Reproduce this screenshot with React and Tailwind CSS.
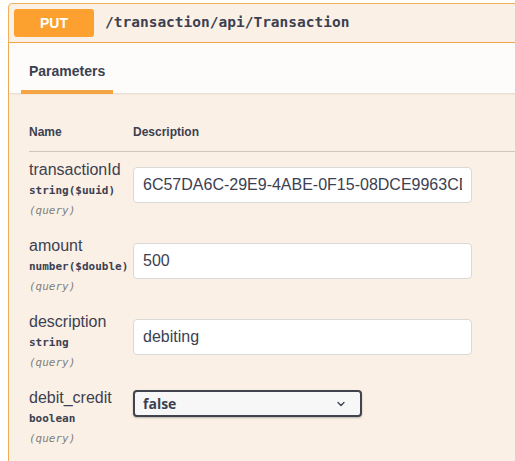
import React from "react";

const rows = [
  { name: "transactionId", type: "string($uuid)", value: "6C57DA6C-29E9-4ABE-0F15-08DCE9963CDE" },
  { name: "amount", type: "number($double)", value: "500" },
  { name: "description", type: "string", value: "debiting" },
];

const Chevron = () => (
  <svg width="10" height="10" viewBox="0 0 20 20" className="text-[#3b4151]">
    <path d="M4 7l6 6 6-6" fill="none" stroke="currentColor" strokeWidth="2.6" strokeLinecap="round" strokeLinejoin="round" />
  </svg>
);

const ParamName = ({ name, type }) => (
  <div className="w-[104px] shrink-0 text-[#3b4151]">
    <div className="text-[16px] leading-[20px] font-['Liberation_Sans',Arial,sans-serif]">{name}</div>
    <div className="text-[11px] leading-[22px] font-bold font-['DejaVu_Sans_Mono',monospace]">{type}</div>
    <div className="text-[11px] leading-[18px] italic text-[#808080] font-['DejaVu_Sans_Mono',monospace]">(query)</div>
  </div>
);

export default function App() {
  return (
    <div className="w-[515px] h-[461px] overflow-hidden bg-white pt-[3px] pl-[8px]">
      <div className="w-[540px] h-[500px] border border-[#f3ae5a] rounded-[4px] bg-[#fbf0e6]">
        {/* summary bar */}
        <div className="flex items-center gap-[11px] p-[5px] border-b border-[#f0a84e]">
          <div className="w-[80px] h-[28px] rounded-[3px] bg-[#fca130] flex items-center justify-center text-white text-[14px] font-bold font-['Liberation_Sans',Arial,sans-serif]">
            PUT
          </div>
          <span className="text-[14.5px] font-bold text-[#3b4151] font-['DejaVu_Sans_Mono',monospace]">
            /transaction/api/Transaction
          </span>
        </div>

        {/* tab header */}
        <div className="h-[50px] bg-[#fefcfa] shadow-[0_1px_2px_rgba(0,0,0,0.1)] pl-[12px] pt-[15px]">
          <div className="inline-block w-[92px]">
            <div className="px-2 text-[14px] leading-[20px] font-bold text-[#3b4151] font-['Liberation_Sans',Arial,sans-serif]">
              Parameters
            </div>
            <div className="mt-[9px] h-[4px] bg-[#f4a443]"></div>
          </div>
        </div>

        {/* table */}
        <div className="pl-[20px] pt-[31px]">
          <div className="flex pb-[11px] border-b border-[#cfc5bb] text-[12px] leading-[16px] font-bold text-[#3b4151] font-['Liberation_Sans',Arial,sans-serif]">
            <div className="w-[104px]">Name</div>
            <div>Description</div>
          </div>

          {rows.map((r) => (
            <div key={r.name} className="flex py-2">
              <ParamName name={r.name} type={r.type} />
              <input
                readOnly
                value={r.value}
                className="mt-[7px] w-[339px] h-[36px] px-[9px] bg-white border border-[#d9d9d9] rounded-[4px] text-[16px] text-[#3b4151] outline-none font-['Liberation_Sans',Arial,sans-serif]"
              />
            </div>
          ))}

          <div className="flex py-2">
            <ParamName name="debit_credit" type="boolean" />
            <div className="mt-[2px] w-[229px] h-[27px] flex items-center justify-between pl-[8px] pr-[14px] bg-[#f7f7f7] border-2 border-[#41444e] rounded-[4px] shadow-[0_1px_2px_rgba(0,0,0,0.25)]">
              <span className="text-[14px] font-bold text-[#3b4151] font-['Open_Sans',sans-serif]">false</span>
              <Chevron />
            </div>
          </div>
        </div>
      </div>
    </div>
  );
}
